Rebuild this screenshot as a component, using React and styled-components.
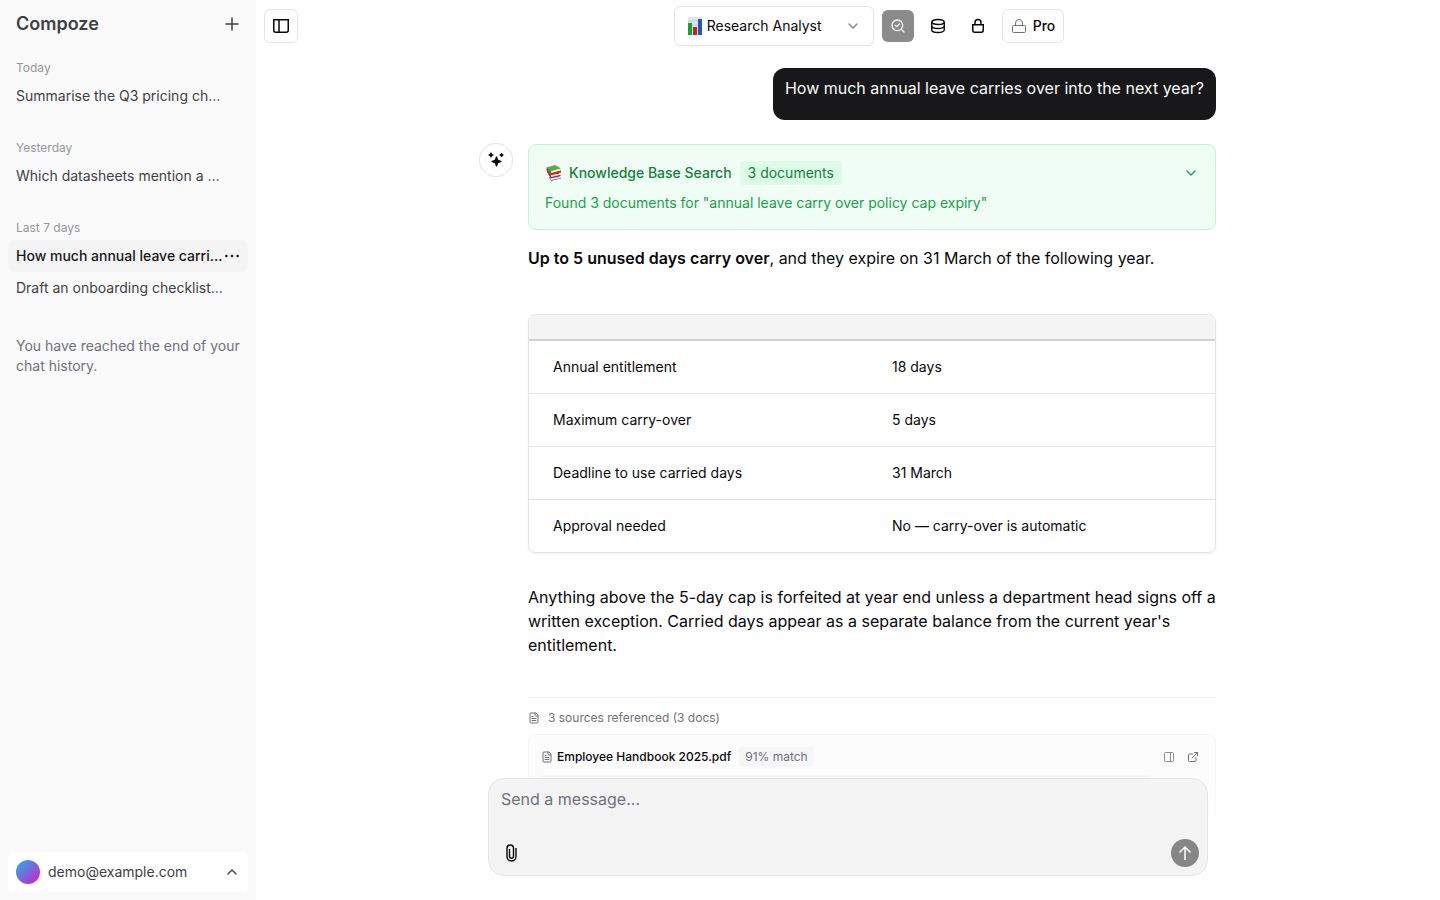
import styled, { createGlobalStyle, css } from 'styled-components';

const chatGroups = [
	{ label: 'Today', chats: [{ title: 'Summarise the Q3 pricing ch…' }] },
	{ label: 'Yesterday', chats: [{ title: 'Which datasheets mention a …' }] },
	{
		label: 'Last 7 days',
		chats: [
			{ title: 'How much annual leave carri…', active: true },
			{ title: 'Draft an onboarding checklist…' },
		],
	},
];

const leaveRows = [
	['Annual entitlement', '18 days'],
	['Maximum carry-over', '5 days'],
	['Deadline to use carried days', '31 March'],
	['Approval needed', 'No — carry-over is automatic'],
];

const PlusIcon = () => (
	<svg width="16" height="16" viewBox="0 0 16 16" fill="none" stroke="currentColor" strokeWidth="1.5">
		<path d="M8 1.5v13M1.5 8h13" />
	</svg>
);

const SidebarIcon = () => (
	<svg width="16" height="16" viewBox="0 0 16 16" fill="none" stroke="currentColor" strokeWidth="1.5">
		<path d="M.75 1.75h14.5v10.5a2 2 0 0 1-2 2H2.75a2 2 0 0 1-2-2zM6 1.75v12.5" />
	</svg>
);

const MoreIcon = () => (
	<svg width="16" height="16" viewBox="0 0 16 16" fill="currentColor">
		<circle cx="2.4" cy="8" r="1.3" />
		<circle cx="8" cy="8" r="1.3" />
		<circle cx="13.6" cy="8" r="1.3" />
	</svg>
);

const ChevronIcon = ({ up }) => (
	<svg
		width="16"
		height="16"
		viewBox="0 0 24 24"
		fill="none"
		stroke="currentColor"
		strokeWidth="2"
		strokeLinecap="round"
		strokeLinejoin="round"
	>
		<path d={up ? 'm18 15-6-6-6 6' : 'm6 9 6 6 6-6'} />
	</svg>
);

const SearchCheckIcon = () => (
	<svg
		width="16"
		height="16"
		viewBox="0 0 24 24"
		fill="none"
		stroke="currentColor"
		strokeWidth="2"
		strokeLinecap="round"
		strokeLinejoin="round"
	>
		<path d="m8 11 2 2 4-4" />
		<circle cx="11" cy="11" r="8" />
		<path d="m21 21-4.3-4.3" />
	</svg>
);

const DatabaseIcon = () => (
	<svg width="16" height="16" viewBox="0 0 16 16" fill="none" stroke="currentColor" strokeWidth="1.4">
		<ellipse cx="8" cy="4" rx="6.25" ry="2.5" />
		<path d="M1.75 4v8c0 1.4 2.8 2.5 6.25 2.5s6.25-1.1 6.25-2.5V4" />
		<path d="M1.75 8c0 1.4 2.8 2.5 6.25 2.5s6.25-1.1 6.25-2.5" />
	</svg>
);

const SolidLockIcon = () => (
	<svg width="16" height="16" viewBox="0 0 16 16" fill="none" stroke="currentColor" strokeWidth="1.5">
		<path d="M2.75 6.75h10.5v5.5a2 2 0 0 1-2 2h-6.5a2 2 0 0 1-2-2z" />
		<path d="M5 6.75V4.5a3 3 0 0 1 6 0v2.25" />
	</svg>
);

const ProLockIcon = () => (
	<svg width="16" height="16" viewBox="0 0 16 16" fill="none" stroke="currentColor" strokeWidth="1">
		<rect x="1.5" y="7.5" width="13" height="7" rx="1" />
		<path d="M4.5 7.5V5a3.5 3.5 0 0 1 7 0v2.5" />
	</svg>
);

const SparklesIcon = () => (
	<svg width="16" height="16" viewBox="0 0 16 16" fill="currentColor">
		<path d="M2.5.5h1l.5 1.500L5.500 2.500v1L4 4l-.5 1.500h-1L2 4 .5 3.500v-1L2 2z" />
		<path d="M8 4.500h1l1.250 3.250L13.500 9v1l-3.250 1.250L9 14.500H8l-1.250-3.250L3.500 10V9l3.250-1.250z" />
		<path d="M13 1h1l.4 1.100 1.100.4v1l-1.100.4L14 5h-1l-.4-1.100-1.100-.4v-1l1.100-.4z" />
	</svg>
);

const ChartEmoji = () => (
	<svg width="16" height="18" viewBox="0 0 16 18">
		<rect x="1" width="14" height="18" fill="#dfe5ef" />
		<path d="M1 4h14M1 8h14M1 12h14" stroke="#c4cddd" />
		<rect x="1" y="6" width="4" height="12" fill="#12a52b" />
		<rect x="6" y="10" width="4" height="8" fill="#c11f2b" />
		<rect x="11" y="2" width="4" height="16" fill="#1d5bb5" />
	</svg>
);

const BooksEmoji = () => (
	<svg width="18" height="18" viewBox="0 0 18 18">
		<path d="m4 13 10-1.500 2 3-10 2.500z" fill="#5c5387" />
		<path d="m5 14.500 10-2 .5 1.500L6 16.200z" fill="#e9e7f2" />
		<path d="m2.500 9.500 11-1 2.500 3-10 2.500z" fill="#a6231d" />
		<path d="m5.500 11 10-1.500v1.200L6.500 13z" fill="#f4eee6" />
		<path d="m1.500 5 4 3.500L16 6v2.500L6 11 2 8.500z" fill="#c73426" />
		<path d="M1.500 3.500 10 1l6 3.500L6 7.500z" fill="#58a94a" />
		<path d="m6 7.300 10-2.800v1.700L6.500 9z" fill="#e8efdf" />
		<path d="M1.500 3.500 6 7.500v1.500L1.500 5.500z" fill="#2d7431" />
	</svg>
);

const FileIcon = () => (
	<svg
		width="12"
		height="12"
		viewBox="0 0 24 24"
		fill="none"
		stroke="currentColor"
		strokeWidth="2"
		strokeLinecap="round"
		strokeLinejoin="round"
	>
		<path d="M15 2H6a2 2 0 0 0-2 2v16a2 2 0 0 0 2 2h12a2 2 0 0 0 2-2V7Z" />
		<path d="M14 2v4a2 2 0 0 0 2 2h4M10 9H8M16 13H8M16 17H8" />
	</svg>
);

const PanelRightIcon = () => (
	<svg width="12" height="12" viewBox="0 0 24 24" fill="none" stroke="currentColor" strokeWidth="1.6">
		<rect x="3" y="3" width="18" height="18" rx="2" />
		<path d="M15 3v18" />
	</svg>
);

const ExternalIcon = () => (
	<svg
		width="12"
		height="12"
		viewBox="0 0 24 24"
		fill="none"
		stroke="currentColor"
		strokeWidth="2"
		strokeLinecap="round"
		strokeLinejoin="round"
	>
		<path d="M15 3h6v6M10 14 21 3M18 13v6a2 2 0 0 1-2 2H5a2 2 0 0 1-2-2V8a2 2 0 0 1 2-2h6" />
	</svg>
);

const PaperclipIcon = () => (
	<svg width="14" height="18" viewBox="0 0 14 18" fill="none" stroke="currentColor" strokeWidth="1.4">
		<path d="M11 4v8.500a4.500 4.500 0 0 1-9 0V4.200a3.250 3.250 0 0 1 6.500 0V12.200a2 2 0 0 1-4 0V5" />
	</svg>
);

const ArrowUpIcon = () => (
	<svg width="16" height="16" viewBox="0 0 16 16" fill="none" stroke="currentColor" strokeWidth="1.5">
		<path d="M8 15V2M2.5 7.500 8 2l5.500 5.500" />
	</svg>
);

const App = () => {
	return (
		<>
			<GlobalStyle />
			<Layout>
				<Sidebar>
					<SidebarHeader>
						<Brand href="#home">Compoze</Brand>
						<PlainButton aria-label="New chat">
							<PlusIcon />
						</PlainButton>
					</SidebarHeader>
					<History>
						{chatGroups.map((group) => (
							<ChatGroup key={group.label}>
								<GroupLabel>{group.label}</GroupLabel>
								{group.chats.map((chat) => (
									<ChatRow key={chat.title} $active={chat.active}>
										<a href="#chat">{chat.title}</a>
										{chat.active && (
											<PlainButton aria-label="More">
												<MoreIcon />
											</PlainButton>
										)}
									</ChatRow>
								))}
							</ChatGroup>
						))}
						<EndNote>You have reached the end of your chat history.</EndNote>
					</History>
					<UserButton>
						<Avatar />
						<span>demo@example.com</span>
						<ChevronIcon up />
					</UserButton>
				</Sidebar>

				<Main>
					<Header>
						<SquareButton $outlined aria-label="Toggle sidebar">
							<SidebarIcon />
						</SquareButton>
						<Controls>
							<AgentPicker>
								<ChartEmoji />
								<select aria-label="Agent">
									<option>Research Analyst</option>
								</select>
								<ChevronIcon />
							</AgentPicker>
							<SquareButton $filled aria-label="Search">
								<SearchCheckIcon />
							</SquareButton>
							<SquareButton aria-label="Knowledge base">
								<DatabaseIcon />
							</SquareButton>
							<SquareButton aria-label="Private">
								<SolidLockIcon />
							</SquareButton>
							<ProButton>
								<ProLockIcon />
								Pro
							</ProButton>
						</Controls>
					</Header>

					<Thread>
						<UserMessage>How much annual leave carries over into the next year?</UserMessage>
						<Reply>
							<BotBadge>
								<SparklesIcon />
							</BotBadge>
							<ReplyBody>
								<SearchCard>
									<SearchTitle>
										<BooksEmoji />
										<strong>Knowledge Base Search</strong>
										<DocCount>3 documents</DocCount>
										<PlainButton aria-label="Show documents">
											<ChevronIcon />
										</PlainButton>
									</SearchTitle>
									<p>Found 3 documents for "annual leave carry over policy cap expiry"</p>
								</SearchCard>
								<Paragraph>
									<strong>Up to 5 unused days carry over</strong>, and they expire on 31 March of the
									following year.
								</Paragraph>
								<TableFrame>
									<LeaveTable>
										<thead>
											<tr>
												<th />
												<th />
											</tr>
										</thead>
										<tbody>
											{leaveRows.map(([name, value]) => (
												<tr key={name}>
													<td>{name}</td>
													<td>{value}</td>
												</tr>
											))}
										</tbody>
									</LeaveTable>
								</TableFrame>
								<Paragraph>
									Anything above the 5-day cap is forfeited at year end unless a department head signs
									off a written exception. Carried days appear as a separate balance from the current
									year's entitlement.
								</Paragraph>
								<Sources>
									<SourcesLabel>
										<FileIcon />
										3 sources referenced (3 docs)
									</SourcesLabel>
									<SourceCard>
										<SourceHead>
											<FileIcon />
											<strong>Employee Handbook 2025.pdf</strong>
											<Match>91% match</Match>
											<SourceActions>
												<PlainButton aria-label="Open in panel">
													<PanelRightIcon />
												</PlainButton>
												<PlainButton aria-label="Open in new tab">
													<ExternalIcon />
												</PlainButton>
											</SourceActions>
										</SourceHead>
										<Excerpt />
									</SourceCard>
								</Sources>
							</ReplyBody>
						</Reply>
					</Thread>

					<Dock>
						<Composer>
							<textarea aria-label="Message" placeholder="Send a message..." />
							<ComposerBar>
								<AttachButton type="button" aria-label="Attach file">
									<PaperclipIcon />
								</AttachButton>
								<SendButton aria-label="Send">
									<ArrowUpIcon />
								</SendButton>
							</ComposerBar>
						</Composer>
					</Dock>
				</Main>
			</Layout>
		</>
	);
};

export default App;

const GlobalStyle = createGlobalStyle`
	* {
		box-sizing: border-box;
	}

	body {
		margin: 0;
		background: #fff;
		color: #09090b;
		font-family: Inter, 'Liberation Sans', sans-serif;
		font-size: 14px;
		line-height: 20px;
	}

	button,
	select,
	textarea {
		font: inherit;
		color: inherit;
	}

	button {
		cursor: pointer;
	}

	a {
		color: inherit;
		text-decoration: none;
	}

	p {
		margin: 0;
	}

	svg {
		display: block;
		flex-shrink: 0;
	}
`;

const Layout = styled.div`
	display: flex;
	height: 100vh;
`;

const Sidebar = styled.aside`
	width: 256px;
	flex-shrink: 0;
	display: flex;
	flex-direction: column;
	background: #fafafa;
	color: #3f3f46;
`;

const SidebarHeader = styled.div`
	display: flex;
	align-items: center;
	justify-content: space-between;
	height: 48px;
	padding: 0 16px;
`;

const Brand = styled.a`
	font-size: 18px;
	line-height: 28px;
	font-weight: 600;
`;

const PlainButton = styled.button`
	display: flex;
	padding: 0;
	border: 0;
	background: none;
`;

const History = styled.nav`
	flex: 1;
	padding: 8px;
`;

const ChatGroup = styled.section`
	margin-bottom: 24px;
`;

const GroupLabel = styled.div`
	padding: 4px 8px;
	font-size: 12px;
	line-height: 16px;
	color: #97979b;
`;

const ChatRow = styled.div`
	display: flex;
	align-items: center;
	justify-content: space-between;
	height: 32px;
	padding: 0 8px;
	border-radius: 6px;
	white-space: nowrap;

	${({ $active }) =>
		$active &&
		css`
			background: #f4f4f5;
			color: #18181b;
			font-weight: 500;
		`}
`;

const EndNote = styled.p`
	padding: 8px;
	color: #71717a;
`;

const UserButton = styled.button`
	display: flex;
	align-items: center;
	gap: 8px;
	height: 40px;
	margin: 8px;
	padding: 0 8px;
	border: 0;
	border-radius: 6px;
	background: #fff;

	span {
		flex: 1;
		text-align: left;
	}
`;

const Avatar = styled.i`
	width: 24px;
	height: 24px;
	border-radius: 50%;
	background: linear-gradient(135deg, #1fb4e8, #7a68dc 50%, #e010cc);
`;

const Main = styled.main`
	flex: 1;
	min-width: 0;
	display: flex;
	flex-direction: column;
	position: relative;
`;

const Header = styled.header`
	display: flex;
	align-items: center;
	gap: 8px;
	height: 52px;
	padding: 0 8px;
`;

const Controls = styled.div`
	flex: 1;
	display: flex;
	align-items: center;
	justify-content: center;
	gap: 8px;
`;

const SquareButton = styled.button`
	display: flex;
	align-items: center;
	justify-content: center;
	width: ${({ $outlined }) => ($outlined ? '34px' : '32px')};
	height: ${({ $outlined }) => ($outlined ? '34px' : '32px')};
	padding: 0;
	border: ${({ $outlined }) => ($outlined ? '1px solid #e4e4e7' : '0')};
	border-radius: 6px;
	background: ${({ $filled }) => ($filled ? '#8b8b8c' : '#fff')};
	color: ${({ $filled }) => ($filled ? '#fafafa' : '#09090b')};
`;

const AgentPicker = styled.label`
	display: flex;
	align-items: center;
	gap: 4px;
	width: 200px;
	height: 40px;
	padding: 0 12px;
	border: 1px solid #e4e4e7;
	border-radius: 6px;
	background: #fff;

	select {
		flex: 1;
		min-width: 0;
		padding: 0;
		border: 0;
		outline: 0;
		appearance: none;
		background: none;
	}

	svg:last-child {
		color: #848486;
	}
`;

const ProButton = styled.button`
	display: flex;
	align-items: center;
	gap: 6px;
	height: 34px;
	padding: 0 8px;
	border: 1px solid #e4e4e7;
	border-radius: 6px;
	background: #fff;
	font-weight: 500;

	svg {
		color: #71717a;
	}
`;

const Thread = styled.div`
	flex: 1;
	min-height: 0;
	overflow: hidden;
	display: flex;
	flex-direction: column;
	gap: 24px;
	width: 100%;
	max-width: 768px;
	margin: 0 auto;
	padding: 16px 16px 0;
`;

const UserMessage = styled.div`
	align-self: flex-end;
	padding: 8px 12px 20px;
	border-radius: 12px;
	background: #18181b;
	color: #fafafa;
	font-size: 16px;
	line-height: 24px;
`;

const Reply = styled.article`
	display: flex;
	gap: 15px;
`;

const BotBadge = styled.div`
	display: flex;
	align-items: center;
	justify-content: center;
	width: 34px;
	height: 34px;
	flex-shrink: 0;
	margin: -1px 0 0 -1px;
	border: 1px solid #e4e4e7;
	border-radius: 50%;
`;

const ReplyBody = styled.div`
	flex: 1;
	min-width: 0;
`;

const SearchCard = styled.div`
	padding: 16px;
	margin-bottom: 16px;
	border: 1px solid #bbf7d0;
	border-radius: 8px;
	background: #f0fdf4;
	color: #16a34a;
`;

const SearchTitle = styled.div`
	display: flex;
	align-items: center;
	margin-bottom: 8px;
	height: 24px;
	color: #15803d;

	strong {
		margin: 0 8px 0 6px;
		font-weight: 500;
	}

	button {
		margin-left: auto;
		color: #16a34a;
	}
`;

const DocCount = styled.span`
	padding: 2px 8px;
	border-radius: 4px;
	background: #dcfce7;
`;

const Paragraph = styled.p`
	font-size: 16px;
	line-height: 24px;

	strong {
		font-weight: 600;
	}
`;

const TableFrame = styled.div`
	margin: 44px 0 32px;
	overflow: hidden;
	border: 1px solid #e4e4e7;
	border-radius: 8px;
	box-shadow: 0 1px 2px rgba(0, 0, 0, 0.06);
`;

const LeaveTable = styled.table`
	width: 100%;
	border-collapse: collapse;

	th {
		height: 25px;
		padding: 0;
		background: #f4f4f5;
		border-bottom: 2px solid #d0d0d3;
	}

	td {
		height: 53px;
		padding: 0 24px;
		border-bottom: 1px solid #e4e4e7;
	}

	td:first-child {
		width: 339px;
	}

	tr:last-child td {
		border-bottom: 0;
	}
`;

const Sources = styled.section`
	margin-top: 40px;
	padding-top: 12px;
	border-top: 1px solid #f1f1f2;
	font-size: 12px;
	line-height: 16px;
	color: #71717a;
`;

const SourcesLabel = styled.div`
	display: flex;
	align-items: center;
	gap: 8px;
	margin-bottom: 8px;
`;

const SourceCard = styled.div`
	padding: 12px;
	border: 1px solid #f5f5f6;
	border-radius: 8px;
	background: #fcfcfc;
`;

const SourceHead = styled.div`
	display: flex;
	align-items: center;
	gap: 4px;

	strong {
		margin-right: 4px;
		font-weight: 500;
		color: #09090b;
	}
`;

const Match = styled.span`
	padding: 2px 6px;
	border-radius: 4px;
	background: #f6f6f7;
`;

const SourceActions = styled.div`
	display: flex;
	gap: 12px;
	margin: 0 4px 0 auto;
`;

const Excerpt = styled.div`
	width: 92%;
	height: 40px;
	margin-top: 8px;
	background: #f7f7f7;
`;

const Dock = styled.div`
	position: absolute;
	bottom: 0;
	left: 0;
	right: 0;
	padding: 8px 16px 24px;
	background: linear-gradient(transparent, #fff 60px);
`;

const Composer = styled.form`
	display: flex;
	flex-direction: column;
	max-width: 720px;
	height: 98px;
	margin: 0 auto;
	border: 1px solid #e4e4e7;
	border-radius: 16px;
	background: #f4f4f5;

	textarea {
		flex: 1;
		min-height: 0;
		padding: 8px 12px;
		border: 0;
		outline: 0;
		resize: none;
		background: none;
		font-size: 16px;
		line-height: 24px;
	}

	textarea::placeholder {
		color: #71717a;
	}
`;

const ComposerBar = styled.div`
	display: flex;
	align-items: center;
	justify-content: space-between;
	padding: 8px;
`;

const AttachButton = styled(PlainButton)`
	padding: 0 8px;
`;

const SendButton = styled(PlainButton)`
	padding: 6px;
	border-radius: 50%;
	background: #868687;
	color: #fff;
`;
